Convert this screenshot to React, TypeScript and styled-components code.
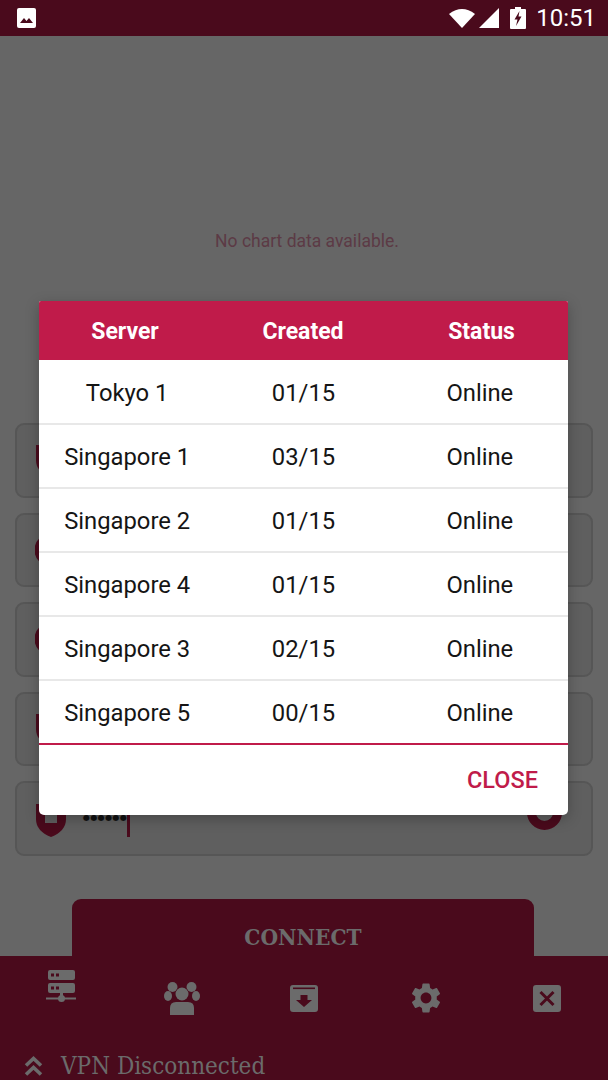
import React from "react";
import styled, { createGlobalStyle } from "styled-components";
import { MdSettings } from "react-icons/md";

const Global = createGlobalStyle`
  html, body { margin: 0; padding: 0; background: #666; }
  * { box-sizing: border-box; }
`;

const Screen = styled.div`
  position: relative;
  width: 608px;
  height: 1080px;
  overflow: hidden;
  display: flex;
  flex-direction: column;
  background: #666;
  font-family: Roboto, sans-serif;
`;

const StatusBar = styled.header`
  height: 36px;
  flex: none;
  background: #4a0a1c;
  display: flex;
  align-items: center;
  padding: 0 12px 0 17px;
  color: #fff;
  svg { display: block; }
`;

const StatusRight = styled.div`
  margin-left: auto;
  display: flex;
  align-items: center;
  gap: 4px;
`;

const Clock = styled.span`
  font-size: 24px;
  margin-left: 6px;
  line-height: 36px;
`;

const ChartArea = styled.section`
  height: 387px;
  flex: none;
  display: flex;
  justify-content: center;
  padding: 195px 0 0 6px;
`;

const ChartEmpty = styled.span`
  font-size: 17.5px;
  line-height: 20px;
  height: 20px;
  color: #5c3a45;
`;

const Fields = styled.div`
  display: flex;
  flex-direction: column;
  gap: 15px;
  padding: 0 15px;
  flex: none;
`;

const Field = styled.div`
  height: 74.6px;
  border: 2px solid #565656;
  border-radius: 9px;
  background: #5f5f5f;
  display: flex;
  align-items: center;
  padding: 0 29px 0 18px;
`;

const Dots = styled.span`
  margin-left: 16px;
  margin-top: -2px;
  font-size: 8px;
  letter-spacing: 0.4px;
  color: #111;
  font-family: "DejaVu Sans", sans-serif;
`;

const Caret = styled.span`
  width: 3px;
  height: 22px;
  margin-top: 14px;
  background: #4a0a1c;
`;

const EyeRing = styled.span`
  margin-left: auto;
  width: 35px;
  height: 35px;
  border-radius: 50%;
  border: 9px solid #4a0a1c;
  margin-top: -12px;
`;

const ConnectWrap = styled.div`
  flex: none;
  padding: 43px 74px 0 72px;
`;

const ConnectButton = styled.div`
  height: 57px;
  background: #4a0a1c;
  border-radius: 9px 9px 0 0;
  color: #6b6b6b;
  font: bold 22.5px "DejaVu Serif Condensed", "Liberation Serif", serif;
  display: flex;
  justify-content: center;
  padding-top: 24px;
  line-height: 28px;
`;

const BottomPanel = styled.footer`
  flex: 1;
  background: #4a0a1c;
  border-top: 1px solid #4a0a1c;
  display: flex;
  flex-direction: column;
`;

const NavRow = styled.nav`
  height: 83px;
  display: grid;
  grid-template-columns: repeat(5, 1fr);
  align-items: center;
  padding-top: 0;
`;

const NavItem = styled.div<{ $raise?: number }>`
  display: flex;
  justify-content: center;
  color: #6b6b6b;
  margin-bottom: ${(p) => p.$raise ?? 0}px;
  svg { display: block; }
`;

const VpnRow = styled.div`
  display: flex;
  align-items: center;
  padding: 13px 0 0 24px;
  gap: 18px;
  color: #6b6b6b;
  svg { display: block; }
`;

const VpnText = styled.span`
  font: 24px/26px "DejaVu Serif Condensed", "Liberation Serif", serif;
`;

const Dialog = styled.div`
  position: absolute;
  left: 39px;
  top: 301px;
  width: 529px;
  height: 514px;
  background: #fff;
  border-radius: 2px 2px 5px 5px;
  box-shadow: 0 4px 14px rgba(0, 0, 0, 0.25);
  overflow: hidden;
  display: flex;
  flex-direction: column;
`;

const TableHead = styled.div`
  height: 59px;
  flex: none;
  background: #c01b4a;
  color: #fff;
  display: grid;
  grid-template-columns: 172px 184px 173px;
  align-items: center;
  text-align: center;
  font-size: 23px;
  font-weight: 700;
  padding-top: 1px;
`;

const Row = styled.div<{ $first?: boolean }>`
  height: ${(p) => (p.$first ? 63 : 64)}px;
  flex: none;
  display: grid;
  grid-template-columns: repeat(3, 1fr);
  align-items: center;
  text-align: center;
  font-size: 23.8px;
  color: #151515;
  padding-top: 2px;
  border-top: ${(p) => (p.$first ? "none" : "2px solid #e8e8e8")};
`;

const DialogFooter = styled.div`
  flex: 1;
  border-top: 2px solid #c01b4a;
  display: flex;
  justify-content: flex-end;
  align-items: center;
  padding: 0 30px 0 0;
`;

const CloseButton = styled.button`
  border: 0;
  background: none;
  padding: 0;
  color: #c01b4a;
  font: 500 23.5px Roboto, sans-serif;
`;

const rows = [
  ["Tokyo 1", "01/15", "Online"],
  ["Singapore 1", "03/15", "Online"],
  ["Singapore 2", "01/15", "Online"],
  ["Singapore 4", "01/15", "Online"],
  ["Singapore 3", "02/15", "Online"],
  ["Singapore 5", "00/15", "Online"],
];

const Shield = () => (
  <svg width="32" height="36" viewBox="0 0 32 36">
    <path d="M1 3 L31 3 L31 18 Q31 30 16 36 Q1 30 1 18 Z" fill="#4a0a1c" />
    <rect x="10" y="11" width="12" height="11" fill="#5f5f5f" />
  </svg>
);

const Globe = () => (
  <svg width="32" height="34" viewBox="0 0 32 34">
    <circle cx="16" cy="17" r="14" fill="none" stroke="#4a0a1c" strokeWidth="5" />
  </svg>
);

export default function App() {
  return (
    <Screen>
      <Global />
      <StatusBar>
        <svg width="19" height="20" viewBox="0 0 19 20">
          <path d="M2 0H17a2 2 0 0 1 2 2V18a2 2 0 0 1-2 2H2a2 2 0 0 1-2-2V2a2 2 0 0 1 2-2Z" fill="#fff" />
          <path d="M3 15 L7 10 L9.5 13 L12 10 L16 15 Z" fill="#4a0a1c" />
        </svg>
        <StatusRight>
          <svg width="26" height="20" viewBox="0 0 26 20">
            <path d="M0 6 Q13 -4 26 6 L13 20 Z" fill="#fff" />
          </svg>
          <svg width="20" height="20" viewBox="0 0 20 20">
            <path d="M20 0 V20 H0 Z" fill="#fff" />
          </svg>
          <svg width="16" height="22" viewBox="0 0 16 22" style={{ marginLeft: 7 }}>
            <path d="M5 0H11V2H15a1 1 0 0 1 1 1V21a1 1 0 0 1-1 1H1a1 1 0 0 1-1-1V3a1 1 0 0 1 1-1H5Z" fill="#fff" />
            <path d="M9.5 4 L4.5 12.5 H7.5 L6 19 L11.5 9.5 H8.5 Z" fill="#4a0a1c" />
          </svg>
          <Clock>10:51</Clock>
        </StatusRight>
      </StatusBar>

      <ChartArea>
        <ChartEmpty>No chart data available.</ChartEmpty>
      </ChartArea>

      <Fields>
        <Field><Shield /></Field>
        <Field><Globe /></Field>
        <Field><Globe /></Field>
        <Field><Shield /></Field>
        <Field>
          <Shield />
          <Dots>●●●●●●</Dots>
          <Caret />
          <EyeRing />
        </Field>
      </Fields>

      <ConnectWrap>
        <ConnectButton>CONNECT</ConnectButton>
      </ConnectWrap>

      <BottomPanel>
        <NavRow>
          <NavItem $raise={24}>
            <svg width="30" height="32" viewBox="0 0 30 32" fill="currentColor">
              <rect x="2" y="0" width="27" height="10" rx="2" />
              <rect x="2" y="13" width="27" height="10" rx="2" />
              <rect x="5" y="3.5" width="3" height="3" fill="#4a0a1c" />
              <rect x="10" y="3.5" width="3" height="3" fill="#4a0a1c" />
              <rect x="5" y="16.5" width="3" height="3" fill="#4a0a1c" />
              <rect x="10" y="16.5" width="3" height="3" fill="#4a0a1c" />
              <rect x="14" y="23" width="3" height="4" />
              <circle cx="15.5" cy="28.5" r="3.5" />
              <rect x="0" y="27.5" width="30" height="2" />
            </svg>
          </NavItem>
          <NavItem>
            <svg width="36" height="34" viewBox="0 0 36 34" fill="currentColor">
              <circle cx="8.5" cy="6" r="5" />
              <circle cx="27.5" cy="6" r="5" />
              <ellipse cx="4" cy="15" rx="4" ry="5" />
              <ellipse cx="32" cy="15" rx="4" ry="5" />
              <circle cx="18" cy="13" r="7" fill="#4a0a1c" />
              <circle cx="18" cy="13" r="6.5" />
              <path d="M6 34 V27 Q6 21 12 21 H24 Q30 21 30 27 V34 Z" />
            </svg>
          </NavItem>
          <NavItem>
            <svg width="28" height="27" viewBox="0 0 28 27" fill="currentColor">
              <rect x="0" y="0" width="28" height="27" rx="3" />
              <rect x="3" y="2.5" width="22" height="1.6" fill="#4a0a1c" />
              <path d="M10.5 10 H17.5 V15 H22 L14 22 L6 15 H10.5 Z" fill="#4a0a1c" />
            </svg>
          </NavItem>
          <NavItem>
            <MdSettings size={36} />
          </NavItem>
          <NavItem>
            <svg width="28" height="27" viewBox="0 0 28 27" fill="currentColor">
              <rect x="0" y="0" width="28" height="27" rx="3" />
              <path d="M7.5 7 L20.5 20 M20.5 7 L7.5 20" stroke="#4a0a1c" strokeWidth="3" />
            </svg>
          </NavItem>
        </NavRow>
        <VpnRow>
          <svg width="19" height="20" viewBox="0 0 19 20" fill="none" stroke="currentColor" strokeWidth="3.6">
            <path d="M2 9.5 L9.5 2.5 L17 9.5" />
            <path d="M2 18.5 L9.5 11.5 L17 18.5" />
          </svg>
          <VpnText>VPN Disconnected</VpnText>
        </VpnRow>
      </BottomPanel>

      <Dialog>
        <TableHead>
          <span>Server</span>
          <span>Created</span>
          <span>Status</span>
        </TableHead>
        {rows.map((r, i) => (
          <Row key={i} $first={i === 0}>
            <span>{r[0]}</span>
            <span>{r[1]}</span>
            <span>{r[2]}</span>
          </Row>
        ))}
        <DialogFooter>
          <CloseButton>CLOSE</CloseButton>
        </DialogFooter>
      </Dialog>
    </Screen>
  );
}
